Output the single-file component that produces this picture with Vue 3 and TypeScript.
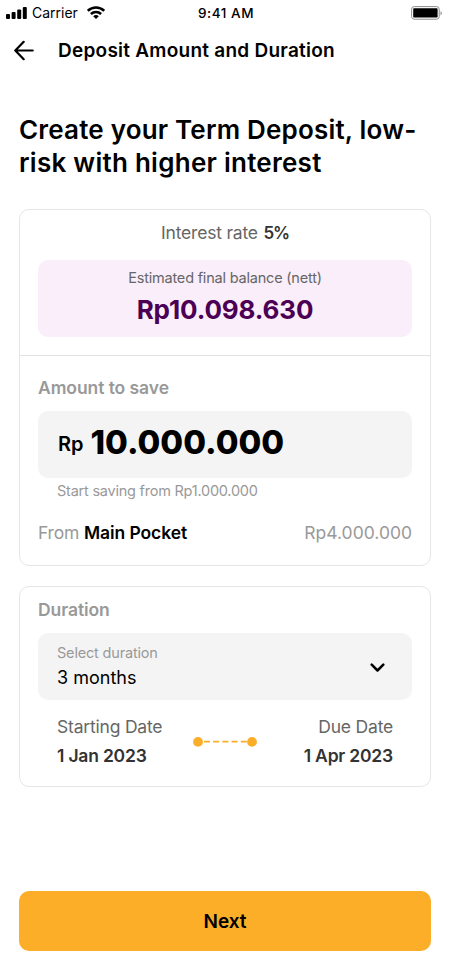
<script setup lang="ts">
interface DepositPlan {
  rate: string
  estimate: string
  amount: string
  balance: string
  duration: string
  start: string
  due: string
}

const plan: DepositPlan = {
  rate: '5%',
  estimate: 'Rp10.098.630',
  amount: '10.000.000',
  balance: 'Rp4.000.000',
  duration: '3 months',
  start: '1 Jan 2023',
  due: '1 Apr 2023',
}
</script>

<template>
  <main class="screen">
    <header class="status">
      <div class="network">
        <svg class="signal" width="21" height="12" viewBox="0 0 21 12"><rect x="0" y="7" width="4" height="5" rx="1" /><rect x="5.6" y="5" width="4" height="7" rx="1" /><rect x="11.2" y="2.5" width="4" height="9.5" rx="1" /><rect x="16.8" y="0" width="4" height="12" rx="1" /></svg>
        <span class="carrier">Carrier</span>
        <svg class="wifi" width="18" height="13" viewBox="0 0 18 13" fill="none" stroke="#000" stroke-width="2.5"><path d="M.8 4.8a11.8 11.8 0 0 1 16.4 0" /><path d="M3.9 8a7.3 7.3 0 0 1 10.2 0" /><path d="M9 12.9 6.2 10.2a3.9 3.9 0 0 1 5.6 0Z" fill="#000" stroke="none" /></svg>
      </div>
      <span class="clock">9:41 AM</span>
      <svg class="battery" width="32" height="14" viewBox="0 0 32 14"><rect x=".6" y=".6" width="27.6" height="12.6" rx="2.6" fill="#fff" stroke="#8c8c8c" /><rect x="2.2" y="2.2" width="24.4" height="9.4" rx=".8" /><path d="M29.5 5v4.4q1.400-.7 1.400-2.200T29.500 5Z" fill="#999" /></svg>
    </header>

    <nav class="bar">
      <svg width="21" height="21" viewBox="0 0 21 21" fill="none" stroke="#000" stroke-width="2.2" stroke-linecap="round" stroke-linejoin="round"><path d="M18.700 10.500H1.600M9.700 1.800 1.300 10.500l8.400 8.700" /></svg>
      <span class="bar-title">Deposit Amount and Duration</span>
    </nav>

    <h1 class="heading">Create your Term Deposit, low-<br /><span class="heading-end">risk with higher interest</span></h1>

    <section class="card savings">
      <div class="summary">
        <p class="rate">Interest rate <b>{{ plan.rate }}</b></p>
        <div class="estimate">
          <span class="estimate-label">Estimated final balance (nett)</span>
          <strong class="estimate-value">{{ plan.estimate }}</strong>
        </div>
      </div>
      <div class="amount">
        <h2 class="label">Amount to save</h2>
        <div class="field money"><span class="currency">Rp</span><span class="value">{{ plan.amount }}</span></div>
        <p class="hint">Start saving from Rp1.000.000</p>
        <div class="source"><span><span class="from">From</span> <b>Main Pocket</b></span><span class="balance">{{ plan.balance }}</span></div>
      </div>
    </section>

    <section class="card duration">
      <h2 class="label">Duration</h2>
      <div class="field select">
        <div class="choice"><span class="choice-label">Select duration</span><span class="choice-value">{{ plan.duration }}</span></div>
        <svg class="chevron" width="15" height="10" viewBox="0 0 15 10" fill="none" stroke="#000" stroke-width="2.5" stroke-linejoin="round" stroke-linecap="round"><path d="M1.700 1.700 7.500 7.500l5.800-5.800" /></svg>
      </div>
      <div class="dates">
        <div class="date"><span class="date-label">Starting Date</span><b>{{ plan.start }}</b></div>
        <svg width="65" height="10" viewBox="0 0 65 10"><path d="M11 4.700h44" stroke="#fcae29" stroke-width="1.700" stroke-dasharray="6 3.200" /><circle cx="5" cy="4.900" r="4.900" fill="#fcae29" /><circle cx="59" cy="4.900" r="4.900" fill="#fcae29" /></svg>
        <div class="date end"><span class="date-label">Due Date</span><b>{{ plan.due }}</b></div>
      </div>
    </section>

    <button class="next" type="button">Next</button>
  </main>
</template>

<style>
body { background: #fff; }
</style>

<style scoped>
.screen {
  box-sizing: border-box;
  width: 450px;
  height: 975px;
  overflow: hidden;
  display: flex;
  flex-direction: column;
  font-family: Inter, "Noto Sans", sans-serif;
  color: #000;
  white-space: nowrap;
}
h1, h2, p { margin: 0; }
b { font-weight: 600; }

.status { display: grid; grid-template-columns: 1fr auto 1fr; align-items: center; height: 25px; padding: 0 7px 0 6px; flex: none; }
.network { display: flex; align-items: center; }
.carrier { margin-left: 5px; font-size: 14px; }
.wifi { margin-left: 9px; }
.clock { padding-left: 3px; font-size: 13.5px; font-weight: 500; letter-spacing: .55px; }
.battery { justify-self: end; }

.bar { display: flex; align-items: center; height: 50px; padding-left: 14px; gap: 23px; flex: none; }
.bar-title { font-size: 19px; font-weight: 600; letter-spacing: .25px; }
.heading { margin: 38px 0 0 19px; font-size: 26px; line-height: 33px; font-weight: 600; letter-spacing: .19px; }
.heading-end { letter-spacing: .26px; }

.card { box-sizing: border-box; margin: 0 19px; border: 1px solid #e6e6e6; border-radius: 10px; flex: none; }
.savings { margin-top: 30px; height: 357px; }
.summary { box-sizing: border-box; height: 146px; border-bottom: 1px solid #e2e2e2; padding: 11px 18px; }
.rate { font-size: 17.5px; line-height: 24px; text-align: center; color: #666; letter-spacing: -.2px; }
.rate b { margin-left: 1px; color: #333; font-size: 17px; letter-spacing: -1.2px; }
.estimate { display: flex; flex-direction: column; align-items: center; box-sizing: border-box; height: 77px; margin-top: 15px; padding-top: 8px; border-radius: 10px; background: #f9eef9; }
.estimate-label { font-size: 14.5px; line-height: 20px; color: #666; letter-spacing: -.2px; }
.estimate-value { margin-top: 4px; font-size: 26px; line-height: 36px; font-weight: 700; color: #4b0055; letter-spacing: -.15px; }

.amount { padding: 20px 18px; }
.label { font-size: 17.5px; line-height: 24px; font-weight: 600; color: #999; letter-spacing: -.07px; }
.field { display: flex; align-items: center; box-sizing: border-box; height: 67px; margin-top: 11px; padding: 0 19px; border-radius: 10px; background: #f4f4f4; }
.money { padding: 0 20px 2px; }
.currency { margin-right: 7px; font-size: 20px; font-weight: 600; }
.value { padding-bottom: 3px; font-size: 33px; font-weight: 800; }
.hint { margin-top: 3px; padding-left: 19px; font-size: 14.5px; line-height: 20px; color: #999; letter-spacing: -.23px; }
.source { display: flex; justify-content: space-between; margin-top: 20px; font-size: 17.5px; line-height: 24px; }
.source b { letter-spacing: -.1px; }
.from { letter-spacing: -.2px; }
.from, .balance { color: #999; }

.duration { margin-top: 20px; height: 201px; padding: 11px 18px; }
.select { justify-content: space-between; padding-right: 27px; }
.choice { display: flex; flex-direction: column; }
.choice-label { font-size: 14.5px; line-height: 20px; color: #999; letter-spacing: -.18px; }
.choice-value { margin-top: 3px; font-size: 18px; line-height: 24px; }
.chevron { margin-top: 2px; }
.dates { display: grid; grid-template-columns: 1fr 65px 1fr; align-items: center; margin-top: 13px; padding: 0 19px; font-size: 17.5px; letter-spacing: -.2px; }
.date { display: flex; flex-direction: column; line-height: 28.5px; color: #333; }
.date-label { color: #666; }
.end { align-items: flex-end; }

.next { flex: none; height: 60px; margin: auto 19px 24px; padding: 0; border: 0; border-radius: 10px; background: #fcae29; color: #000; font: 600 19px Inter, "Noto Sans", sans-serif; }
</style>
